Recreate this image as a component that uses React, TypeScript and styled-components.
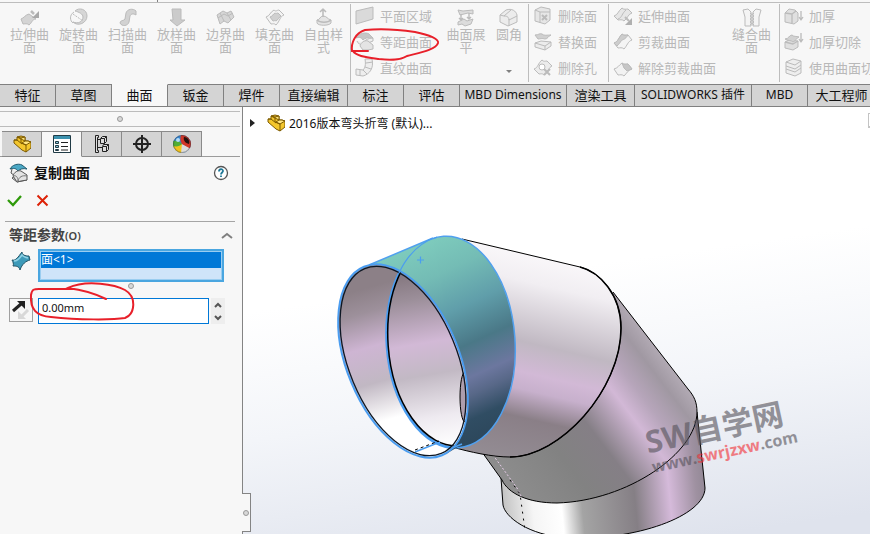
import React from "react";
import styled, { createGlobalStyle, css } from "styled-components";

const GlobalStyle = createGlobalStyle`
  * { box-sizing: border-box; }
  body {
    margin: 0;
    overflow: hidden;
    background: #f7f7f7;
    color: #111;
    font-family: "Noto Sans", "Noto Sans CJK SC", sans-serif;
    font-size: 13px;
  }
  button, input { font: inherit; color: inherit; margin: 0; padding: 0; }
  svg { display: block; flex: none; }
`;

const Page = styled.div`
  position: relative;
  display: flex;
  flex-direction: column;
  min-height: 100vh;
  overflow: hidden;
`;

/* Ribbon */
const TopStrip = styled.div`
  height: 3px;
  border-bottom: 1px solid #bdbdbd;
  &::before {
    content: "";
    display: block;
    width: 157px;
    height: 2px;
    border-right: 1px solid #808080;
  }
`;

const Ribbon = styled.div`
  display: flex;
  height: 81px;
  padding-top: 1px;
`;

const RibbonGroup = styled.div<{ $width: number }>`
  display: flex;
  flex: none;
  width: ${(p) => p.$width}px;
  height: 78px;
  border-right: 1px solid #bdbdbd;
`;

const BigButton = styled.button<{ $width?: number }>`
  display: flex;
  flex: none;
  flex-direction: column;
  align-items: center;
  width: ${(p) => p.$width ?? 49}px;
  padding-top: 4px;
  border: 0;
  background: none;
  color: #b8b8b8;
  line-height: 13px;
  text-align: center;
`;

const BigLabel = styled.span`
  width: 40px;
  word-break: break-all;
`;

const DropArrow = styled.span`
  margin-top: 29px;
  border: 3px solid transparent;
  border-top-color: #808080;
  border-bottom: 0;
`;

const SmallColumn = styled.div<{ $width: number }>`
  display: flex;
  flex: none;
  flex-direction: column;
  width: ${(p) => p.$width}px;
  padding-left: 4px;
`;

const SmallButton = styled.button`
  display: flex;
  align-items: center;
  gap: 5px;
  height: 26px;
  padding-bottom: 2px;
  border: 0;
  background: none;
  color: #b8b8b8;
  line-height: 20px;
  white-space: nowrap;
`;

const CommandTabs = styled.nav`
  display: flex;
  height: 23px;
  overflow: hidden;
`;

const CommandTab = styled.button<{ $width: number; $active?: boolean; $latin?: boolean }>`
  flex: none;
  width: ${(p) => p.$width}px;
  padding-bottom: 1px;
  border: 1px solid #808080;
  border-left: 0;
  background: #d4d4d4;
  color: #111;
  font-size: ${(p) => (p.$latin ? 12 : 13)}px;
  line-height: 20px;
  white-space: nowrap;
  ${(p) =>
    p.$active &&
    css`
      border-top-color: #f7f7f7;
      background: #f7f7f7;
    `}
`;

/* Property panel */
const Body = styled.div`
  display: flex;
  flex: 1;
`;

const Panel = styled.aside`
  display: flex;
  flex: none;
  flex-direction: column;
  width: 243px;
  border-right: 1px solid #848484;
  background: #f7f7f7;
`;

const GripBar = styled.div`
  display: flex;
  align-items: center;
  justify-content: center;
  height: 16px;
  margin: 4px 2px 0 0;
  border: solid #bcbcbc;
  border-width: 1px 0;
`;

const Dot = styled.span`
  width: 6px;
  height: 6px;
  border: 1px solid #999;
  border-radius: 50%;
  background: #d8d8d8;
`;

const PanelTabs = styled.div`
  display: flex;
  height: 26px;
  margin: 4px 2px 0 0;
  padding-left: 2px;
  border-bottom: 1px solid #9c9c9c;
`;

const PanelTab = styled.button<{ $active?: boolean }>`
  display: flex;
  align-items: center;
  justify-content: center;
  width: 40px;
  height: 26px;
  border: 1px solid #8a8a8a;
  border-left: 0;
  background: ${(p) => (p.$active ? "#f7f7f7" : "#d4d4d4")};
  ${(p) => p.$active && "border-bottom-color: #f7f7f7;"}
`;

const TitleRow = styled.header`
  display: flex;
  align-items: center;
  gap: 5px;
  height: 32px;
  padding: 0 13px 0 9px;
`;

const Title = styled.h1`
  flex: 1;
  margin: 0;
  font-size: 14px;
  font-weight: 700;
  line-height: 20px;
`;

const IconButton = styled.button`
  display: flex;
  align-items: center;
  justify-content: center;
  border: 0;
  background: none;
`;

const ActionRow = styled.div`
  display: flex;
  gap: 12px;
  height: 32px;
  padding: 3px 7px;
  align-items: flex-start;
`;

const Section = styled.section`
  margin: 0 7px 0 5px;
  border-top: 1px solid #a5a5a5;
`;

const SectionHead = styled.div`
  display: flex;
  align-items: center;
  height: 27px;
  padding: 0 2px 0 4px;
`;

const SectionTitle = styled.h2`
  flex: 1;
  margin: 0;
  color: #444;
  font-size: 14px;
  font-weight: 600;
  line-height: 20px;
`;

const Mnemonic = styled.span`
  font-size: 11px;
`;

const FieldRow = styled.div`
  display: flex;
  gap: 5px;
  padding-left: 4px;
`;

const FieldIcon = styled.div`
  display: flex;
  justify-content: center;
  width: 24px;
  padding-top: 2px;
`;

const SelectionList = styled.div`
  flex: 1;
  height: 33px;
  margin-right: 11px;
  padding: 1px;
  border: 2px solid #4aa6e0;
  outline: 1px solid #9acdf0;
  outline-offset: -3px;
  background: #cfe4f9;
`;

const SelectionItem = styled.div`
  height: 16px;
  background: #0078d7;
  color: #fff;
  font-size: 12px;
  line-height: 15px;
`;

const GripRow = styled.div`
  display: flex;
  justify-content: center;
  align-items: center;
  height: 8px;
  padding-left: 22px;
`;

const ReverseButton = styled(IconButton)`
  width: 24px;
  height: 24px;
  margin-top: 8px;
  border: 1px solid #a0a0a0;
`;

const DistanceInput = styled.input`
  flex: 1;
  min-width: 0;
  height: 26px;
  margin-top: 8px;
  padding: 0 3px 7px;
  border: 1px solid #0078d7;
  border-radius: 0;
  background: #fff;
  font-size: 11px;
`;

const Spinner = styled.div`
  display: flex;
  flex-direction: column;
  width: 14px;
  height: 26px;
  margin: 8px 10px 0 -3px;
  background: #eee;
`;

const SpinButton = styled(IconButton)`
  flex: 1;
`;

/* Graphics area */
const Viewport = styled.main`
  position: relative;
  flex: 1;
  min-width: 0;
  background: linear-gradient(172deg, #fff 0%, #fff 40%, #f3f5f9 65%, #dfe3ed 96%);
`;

const Scene = styled.svg`
  position: absolute;
  inset: 0;
  width: 100%;
  height: 100%;
`;

const TreeRow = styled.div`
  position: relative;
  display: flex;
  align-items: center;
  height: 20px;
  margin-top: 6px;
  padding-left: 6px;
  font-size: 12px;
`;

const TreeToggle = styled(IconButton)`
  width: 6px;
  margin-right: 12px;
`;

const TreeName = styled.span`
  margin-left: 4px;
`;

const Handle = styled.button`
  position: absolute;
  bottom: 2px;
  left: -1px;
  display: flex;
  align-items: center;
  justify-content: center;
  width: 9px;
  height: 39px;
  padding: 0;
  border: 1px solid #848484;
  border-left: 0;
  background: #f7f7f7;
`;

const EdgeButton = styled.span`
  position: absolute;
  top: 6px;
  right: 0;
  width: 2px;
  height: 15px;
  border: 1px solid #c4c4c4;
  border-width: 1px 0 2px 1px;
`;

const Markup = styled.svg`
  position: absolute;
  top: 0;
  left: 0;
  pointer-events: none;
`;

/* Muted ribbon icons */
const iconPaths: Record<string, React.ReactNode> = {
  extrude: (
    <>
      <path d="M1 11c3-1 4-4 8-5l7 5c-4 0-4 4-7 6-2-2-4-1-6-1z" fill="#d4d4d4" />
      <path d="M11 3l3 3" strokeWidth="2.500" />
      <path d="M19 10h-7l7-7z" fill="#a8a8a8" stroke="none" />
    </>
  ),
  revolve: (
    <>
      <path d="M6 3c4-4 12-2 12 5s-9 11-14 6c5 2 10 0 10-5 0-3-4-5-8-6z" fill="#d6d6d6" />
      <path d="M5 4C0 7 1 13 4 15" />
      <path d="M4 6l10 7" strokeDasharray="2 1" />
    </>
  ),
  sweep: (
    <path d="M2 15c0-3 4-2 5-4l1-6c1-4 7-5 10-2v4c-3-2-5-1-6 1l-1 6c-1 4-7 5-9 1z" fill="#d2d2d2" />
  ),
  loft: <path d="M5 1h9v11h4l-8 6-7-6h3z" fill="#cbcbcb" />,
  boundary: (
    <>
      <path d="M1 7l6-4 4 2 4-2 3 6-6 6-4-2-4 3z" fill="#d6d6d6" />
      <path d="M4 5l4 8M11 5l4 7M2 10l6-4 4 2 5-3" />
    </>
  ),
  fill: (
    <>
      <path d="M1 9c4-1 4-5 8-7 2 2 3 0 5 0l5 5c-4 1-4 6-8 10-2-2-3-1-5-1z" fill="#f4f4f4" />
      <path d="M5 9c3-1 3-3 5-4 1 1 2 0 3 0l3 3c-2 1-3 4-5 5-1-1-2 0-3 0z" fill="#d0d0d0" />
    </>
  ),
  freeform: (
    <>
      <path d="M3 12v3c1 3 12 3 14 0v-3c-4-1-4-4-8-4-3 0-3 4-6 4z" fill="#e4e4e4" />
      <path d="M3 12c3 3 11 3 14 0M9 9V1m-3 3l3-3 3 3" strokeWidth="1.5" />
    </>
  ),
  planar: <path d="M1 5l17-4v12L1 18z" fill="#dadada" />,
  offset: (
    <>
      <path d="M2 9c1 3 3 3 5 4 1-4 6-7 11-7v3l-5 2" fill="#eee" />
      <path d="M1 6C4 1 11 0 14 2l4 4c-5-1-8 0-10 2C6 5 4 5 1 6z" fill="#c6c6c6" />
      <path d="M5 14c1-4 5-6 8-5l5 4v4l-5 1-5 0z" fill="#e4e4e4" />
    </>
  ),
  ruled: (
    <>
      <path d="M1 11l7 1c2-2 3-5 2-11h7c2 9-2 15-9 17l-7-1z" fill="#eee" />
      <path d="M5 12v6m3-6l4 4m-2-7l6 2m-5-6l7-1" />
    </>
  ),
  flatten: (
    <>
      <path d="M2 2l5 1 10-1v4l-5-1-8 2zM2 14l6-3 3 2 6-2-2 5-6 2-3-2-4 1z" fill="#dcdcdc" />
      <path d="M5 6v6m-2-2l2 2 2-2m6-5v6m-2-2l2 2 2-2" strokeWidth="1.4" />
    </>
  ),
  fillet: (
    <>
      <path d="M1 7l6-5c6-2 10 1 11 5v7l-9 4-8-4z" fill="#ececec" />
      <path d="M1 7l4 1c4 0 5 2 5 4l8-4M10 11v7M5 8l7-6" />
    </>
  ),
  deleteFace: (
    <>
      <path d="M2 4l6-3 9 2v11l-5 4-10-3z" fill="#e6e6e6" />
      <path d="M2 4l5 2h10M7 6v11" />
      <path d="M9 9l5 5m0-5l-5 5" strokeWidth="2" />
    </>
  ),
  replaceFace: (
    <>
      <path d="M2 11l6-2 10 1v4l-6 4-10-3z" fill="#ececec" />
      <path d="M2 11l10 3 6-4M12 14v4" />
      <path d="M2 3c4 0 4-2 7-1 2 2 5 1 9 1-3 1-3 4-6 4-3-1-5 0-7 0z" fill="#d0d0d0" />
    </>
  ),
  deleteHole: (
    <>
      <path d="M1 11c4-1 4-6 8-9 2 2 3 1 5 1l5 5c-3 1-4 6-8 9-2-2-3-1-5-1z" fill="#ececec" />
      <circle cx="9" cy="9" r="3" fill="#fff" />
      <path d="M11 11l6 6m0-6l-6 6" strokeWidth="2" />
    </>
  ),
  extend: (
    <>
      <path d="M1 10c4-1 4-5 8-8 2 2 4 1 6 1l4 4c-4 1-4 5-8 8-2-2-4-1-6-1z" fill="#e6e6e6" />
      <path d="M5 13c4-1 4-6 8-9" />
      <path d="M12 11l4 4" strokeWidth="2" />
      <path d="M19 12v7h-7z" fill="#b0b0b0" stroke="none" />
    </>
  ),
  trim: (
    <>
      <path d="M1 11c4-1 5-6 8-9 2 2 4 1 6 1l4 5c-4 1-5 6-8 9-2-2-4-1-6-1z" fill="#f4f4f4" />
      <path d="M1 11c4-1 5-6 8-9 2 2 4 1 6 1-3 5-5 4-7 6-1 2-2 3-4 5z" fill="#cdcdcd" />
    </>
  ),
  untrim: (
    <>
      <path d="M1 11c4-1 5-4 8-6 2 2 4 1 6 1l4 5c-4 1-5 4-8 7-2-2-4-1-6-1z" fill="#f2f2f2" />
      <path d="M9 5c2 2 4 1 6 1l4 5-5 2-3-3z" fill="#c6c6c6" />
    </>
  ),
  knit: (
    <>
      <path d="M1 2l5-1 3 3v14H3V9zm18 0l-5-1-3 3v14h6V9z" fill="#f4f4f4" />
      <path d="M8 5l4 3-4 3 4 3-4 3m4-12L8 8l4 3-4 3 4 3" />
    </>
  ),
  thicken: (
    <>
      <path d="M1 7l4-4 6 1 3 3v8l-4 3-9-2z" fill="#e0e0e0" />
      <path d="M1 7l7 1 4-3M8 8v9M17 5v9m-2-3l2 3 2-3" strokeWidth="1.3" />
    </>
  ),
  thickenCut: (
    <>
      <path d="M1 10l4-2 9 1v6l-5 3-8-2z" fill="#e0e0e0" />
      <path d="M1 7c4 0 4-4 7-4 2 2 4 1 7 2-3 1-3 4-6 5-2-2-5-1-8-3z" fill="#d2d2d2" />
      <path d="M1 10l8 2 5-3M17 1v9m-2-3l2 3 2-3" strokeWidth="1.3" />
    </>
  ),
  cutWith: (
    <>
      <path d="M2 4l7-3 8 2v12l-6 3-9-3z" fill="#eee" />
      <path d="M2 4l9 3 6-4M2 8l9 3 6-4M2 11l9 3 6-4" />
    </>
  ),
};

const ToolIcon = ({ name }: { name: string }) => (
  <svg width="20" height="20" viewBox="0 0 20 20" fill="none" stroke="#bbb" strokeLinejoin="round" aria-hidden="true">
    {iconPaths[name]}
  </svg>
);

const BigTool = ({ icon, label, width, drop }: { icon: string; label: string; width?: number; drop?: boolean }) => (
  <BigButton $width={width}>
    <ToolIcon name={icon} />
    <BigLabel>{label}</BigLabel>
    {drop && <DropArrow />}
  </BigButton>
);

const SmallTools = ({ items, width }: { items: [string, string][]; width: number }) => (
  <SmallColumn $width={width}>
    {items.map(([icon, label]) => (
      <SmallButton key={label}>
        <ToolIcon name={icon} />
        {label}
      </SmallButton>
    ))}
  </SmallColumn>
);

const surfaceTools: [string, string][] = [
  ["extrude", "拉伸曲面"],
  ["revolve", "旋转曲面"],
  ["sweep", "扫描曲面"],
  ["loft", "放样曲面"],
  ["boundary", "边界曲面"],
  ["fill", "填充曲面"],
  ["freeform", "自由样式"],
];

const commandTabs: { label: string; width: number; latin?: boolean }[] = [
  { label: "特征", width: 56 },
  { label: "草图", width: 56 },
  { label: "曲面", width: 56 },
  { label: "钣金", width: 56 },
  { label: "焊件", width: 56 },
  { label: "直接编辑", width: 68 },
  { label: "标注", width: 56 },
  { label: "评估", width: 56 },
  { label: "MBD Dimensions", width: 107, latin: true },
  { label: "渲染工具", width: 68 },
  { label: "SOLIDWORKS 插件", width: 117, latin: true },
  { label: "MBD", width: 56, latin: true },
  { label: "大工程师", width: 68 },
];

const PartIcon = () => (
  <svg width="18" height="18" viewBox="0 0 18 18" stroke="#7d5a00" strokeLinejoin="round" aria-hidden="true">
    <path d="M1 5l3 0V2l4-1 4 1v4l3 0 3 1v6l-5 4-4-2-8-7z" fill="#f3c62d" />
    <path d="M4 2l4 1 4-1v4l-3 2 4 2 5-3-3-1h-3z" fill="#ffe680" />
    <path d="M8 3v5l5 2v7M1 5l3 0 5 4" fill="none" />
  </svg>
);

const PropertyIcon = () => (
  <svg width="18" height="18" viewBox="0 0 18 18" aria-hidden="true">
    <path d="M.5.5h17v17H.5z" fill="#fff" stroke="#203b46" />
    <path d="M1 1h16v3H1z" fill="#3b91ae" />
    <path d="M2.500 6.500h3v2h-3zm0 4h3v2h-3zm0 4h3v1h-3z" fill="#8cc7da" stroke="#203b46" />
    <path d="M8 7.500h7M8 11.500h7M8 15h7" stroke="#222" />
  </svg>
);

const ConfigIcon = () => (
  <svg width="16" height="18" viewBox="0 0 16 18" fill="#ddd" stroke="#222" aria-hidden="true">
    <path d="M1.500.5h3v2h-1v13h1v2h-3zM4 4.500h4M4 12.500h5" />
    <path d="M6.500 3.500l2-2h4v5l-2 2h-4zM8.500 11.500l1-2h5v5l-2 2h-4z" />
    <path d="M7 3.500h3.500v5m0-5l2-2M9 11.500h3.500v5m0-5l2-2" fill="none" />
  </svg>
);

const TargetIcon = () => (
  <svg width="18" height="18" viewBox="0 0 18 18" fill="none" stroke="#222" strokeWidth="2" aria-hidden="true">
    <circle cx="9" cy="9" r="6" />
    <path d="M9 0v18M0 9h18" />
  </svg>
);

const BallIcon = () => (
  <svg width="18" height="18" viewBox="0 0 18 18" aria-hidden="true">
    <defs>
      <clipPath id="ball">
        <circle cx="9" cy="9" r="9" />
      </clipPath>
    </defs>
    <g clipPath="url(#ball)">
      <path d="M0 0h18v18H0z" fill="#3685d2" />
      <path d="M0 6c3-1 7 0 9 3v3H0z" fill="#52ae35" />
      <path d="M0 11c4 1 7 0 9-2v9H0z" fill="#f2c21c" />
      <path d="M9 9l9 4v5H8z" fill="#dcdcdc" />
      <path d="M8 0h10v14L9 9C7 6 7 3 8 0z" fill="#d23627" />
      <path d="M11 2c4 0 6 4 5 7-4-1-6-4-5-7z" fill="#26120f" />
      <circle cx="5" cy="5" r="2" fill="#b6dcf5" />
    </g>
    <circle cx="9" cy="9" r="8.500" fill="none" stroke="#333" strokeOpacity=".4" />
  </svg>
);

const CopySurfaceIcon = () => (
  <svg width="20" height="20" viewBox="0 0 20 20" strokeLinejoin="round" aria-hidden="true">
    <path d="M3 6l-1 4 4 3-3 2 5 4 10-2" fill="#eee" stroke="#555" />
    <path d="M1 6C3 2 9 0 13 2l5 4c-4-1-7 0-9 2C7 5 4 5 1 6z" fill="#4ba8c5" stroke="#1f5b70" />
    <path d="M4 13c1-4 5-6 8-5l6 4v5l-6 1-4 1z" fill="#e3e3e3" stroke="#555" />
    <path d="M4 13c3-1 5 1 5 5 1-4 4-6 9-5" fill="none" stroke="#777" />
  </svg>
);

const FaceIcon = () => (
  <svg width="20" height="20" viewBox="0 0 20 20" aria-hidden="true">
    <path d="M1 9c4 1 6-3 10-8 0 3 3 4 7 4l1 4c-4 1-8 4-10 10-1-4-4-4-7-4 1-2 0-4-1-6z" fill="#3d9ab9" stroke="#235467" strokeLinejoin="round" />
    <path d="M3 10c4 0 6-3 8-6 1 2 3 2 6 3" fill="none" stroke="#91d2e5" strokeWidth="1.500" />
  </svg>
);

const PipeScene = () => (
  <Scene viewBox="243 107 627 427" preserveAspectRatio="xMinYMin slice" role="img" aria-label="弯头模型">
    <defs>
      <linearGradient id="upper" gradientUnits="userSpaceOnUse" x1="540" y1="250" x2="492" y2="456">
        <stop offset="0" stopColor="#fbf9fb" />
        <stop offset=".16" stopColor="#f1eef2" />
        <stop offset=".44" stopColor="#c0b8c2" />
        <stop offset=".58" stopColor="#d2b9d6" />
        <stop offset=".66" stopColor="#c7b0cc" />
        <stop offset=".79" stopColor="#8a7f87" />
        <stop offset="1" stopColor="#938c93" />
      </linearGradient>
      <linearGradient id="middle" gradientUnits="userSpaceOnUse" x1="482" y1="452" x2="642" y2="330">
        <stop offset="0" stopColor="#8d8d8d" />
        <stop offset=".3" stopColor="#828282" />
        <stop offset=".5" stopColor="#857f86" />
        <stop offset=".7" stopColor="#d2b8d6" />
        <stop offset=".8" stopColor="#b6a5ba" />
        <stop offset=".92" stopColor="#a098a2" />
        <stop offset="1" stopColor="#b1a9b3" />
      </linearGradient>
      <linearGradient id="lower" gradientUnits="userSpaceOnUse" x1="501" y1="520" x2="705" y2="500">
        <stop offset="0" stopColor="#bdbdbd" />
        <stop offset=".16" stopColor="#f5f5f5" />
        <stop offset=".3" stopColor="#fff" />
        <stop offset=".4" stopColor="#a4a4a4" />
        <stop offset=".66" stopColor="#857f85" />
        <stop offset=".83" stopColor="#d5bada" />
        <stop offset=".96" stopColor="#9f91a1" />
        <stop offset="1" stopColor="#958a98" />
      </linearGradient>
      <linearGradient id="selected" gradientUnits="userSpaceOnUse" x1="430" y1="243" x2="502" y2="436">
        <stop offset="0" stopColor="#7dcabc" />
        <stop offset=".16" stopColor="#74bcb5" />
        <stop offset=".35" stopColor="#609eaa" />
        <stop offset=".53" stopColor="#4a7887" />
        <stop offset=".68" stopColor="#6c779f" />
        <stop offset=".76" stopColor="#586888" />
        <stop offset=".87" stopColor="#304d63" />
        <stop offset="1" stopColor="#2c465a" />
      </linearGradient>
      <linearGradient id="boreFront" gradientUnits="userSpaceOnUse" x1="383" y1="270" x2="365" y2="425">
        <stop offset=".05" stopColor="#8c8087" />
        <stop offset=".2" stopColor="#9d909b" />
        <stop offset=".42" stopColor="#ceb5d3" />
        <stop offset=".65" stopColor="#c1b8c3" />
        <stop offset=".9" stopColor="#fff" />
      </linearGradient>
      <linearGradient id="boreBack" gradientUnits="userSpaceOnUse" x1="420" y1="270" x2="438" y2="447">
        <stop offset="0" stopColor="#84777f" />
        <stop offset=".15" stopColor="#9c8f9a" />
        <stop offset=".4" stopColor="#d2b9d6" />
        <stop offset=".58" stopColor="#c2b9c4" />
        <stop offset=".82" stopColor="#eeeaf0" />
        <stop offset="1" stopColor="#fff" />
      </linearGradient>
      <clipPath id="opening">
        <ellipse cx="403" cy="361" rx="55" ry="101" transform="rotate(-22.5 403 361)" />
      </clipPath>
    </defs>

    <path d="M501 478l2 27c2 12 25 30 64 33 68 3 138-22 138-50l-8-76z" fill="url(#lower)" stroke="#000" />
    <path d="M482 452l20 28c6 13 25 23 55 23 70-2 140-50 140-91 0-10-3-16-9-23l-75-97-80 60z" fill="url(#middle)" />
    <path d="M482 452l20 28c6 13 25 23 55 23 70-2 140-50 140-91 0-10-3-16-9-23l-75-97" fill="none" stroke="#000" />
    <path d="M493 455l24 33 5 10" fill="none" stroke="#e7cce9" strokeDasharray="2 2" />
    <path d="M510 480l10 14 5 36" fill="none" stroke="#000" strokeDasharray="2 5" />
    <path d="M462 239l118 28c20 5 41 28 41 61 0 62-61 129-111 129-18 0-40-5-58-10z" fill="url(#upper)" stroke="#000" />
    <path d="M580 267c20 5 41 28 41 61 0 62-61 129-111 129" fill="none" stroke="#000" strokeWidth="1.5" />

    <ellipse cx="451" cy="342" rx="64" ry="106" transform="rotate(-4 451 342)" fill="url(#selected)" stroke="#50a0ef" strokeWidth="1.5" />
    <path d="M369 265l64-27 20 110 13 94-20 12z" fill="url(#selected)" />
    <path d="M369 265l64-27M430 457l32-13" stroke="#50a0ef" strokeWidth="1.5" />
    <ellipse cx="403" cy="361" rx="56" ry="102" transform="rotate(-22.5 403 361)" fill="url(#boreFront)" stroke="#4b9df0" strokeWidth="2" />
    <g clipPath="url(#opening)">
      <ellipse cx="451" cy="342" rx="64" ry="106" transform="rotate(-4 451 342)" fill="url(#boreBack)" stroke="#4b9df0" strokeWidth="3" />
      <ellipse cx="452" cy="341" rx="64" ry="105" transform="rotate(-4 452 341)" fill="none" stroke="#000" strokeWidth="1.5" />
      <ellipse cx="465" cy="397" rx="5" ry="25" fill="#ad9ead" stroke="#000" />
      <path d="M415 452l25-10" stroke="#4b9df0" strokeWidth="1.5" />
      <path d="M415 450l24-9" stroke="#000" strokeDasharray="3 3" />
    </g>
    <ellipse cx="403" cy="361" rx="54" ry="100" transform="rotate(-22.5 403 361)" fill="none" stroke="#0d1724" strokeWidth="1.3" />
    <path d="M399 273c7-15 19-30 38-36M417 260h7m-3.500-3.500v7" fill="none" stroke="#4b9df0" strokeWidth="1.2" />

    <g transform="rotate(-12 650 453)" fontFamily="'Open Sans', 'Noto Sans CJK SC', sans-serif" fontWeight="700" fill="#55525a" opacity=".6">
      <text x="648" y="453" fontSize="31">SW自学网</text>
      <text x="649" y="473" fontSize="16">
        www.<tspan fill="#f22f35">swrjzxw</tspan>.com
      </text>
    </g>
  </Scene>
);

export default function App() {
  return (
    <Page>
      <GlobalStyle />
      <TopStrip />
      <Ribbon>
        <RibbonGroup $width={351}>
          <SmallColumn $width={5} />
          {surfaceTools.map(([icon, label]) => (
            <BigTool key={label} icon={icon} label={label} />
          ))}
        </RibbonGroup>
        <RibbonGroup $width={178}>
          <SmallTools
            width={92}
            items={[
              ["planar", "平面区域"],
              ["offset", "等距曲面"],
              ["ruled", "直纹曲面"],
            ]}
          />
          <BigTool icon="flatten" label="曲面展平" width={46} />
          <BigTool icon="fillet" label="圆角" width={40} drop />
        </RibbonGroup>
        <RibbonGroup $width={80}>
          <SmallTools
            width={79}
            items={[
              ["deleteFace", "删除面"],
              ["replaceFace", "替换面"],
              ["deleteHole", "删除孔"],
            ]}
          />
        </RibbonGroup>
        <RibbonGroup $width={171}>
          <SmallTools
            width={118}
            items={[
              ["extend", "延伸曲面"],
              ["trim", "剪裁曲面"],
              ["untrim", "解除剪裁曲面"],
            ]}
          />
          <BigTool icon="knit" label="缝合曲面" />
        </RibbonGroup>
        <SmallTools
          width={120}
          items={[
            ["thicken", "加厚"],
            ["thickenCut", "加厚切除"],
            ["cutWith", "使用曲面切"],
          ]}
        />
      </Ribbon>
      <CommandTabs>
        {commandTabs.map((tab) => (
          <CommandTab key={tab.label} $width={tab.width} $latin={tab.latin} $active={tab.label === "曲面"}>
            {tab.label}
          </CommandTab>
        ))}
      </CommandTabs>
      <Body>
        <Panel>
          <GripBar>
            <Dot />
          </GripBar>
          <PanelTabs>
            <PanelTab aria-label="设计树"><PartIcon /></PanelTab>
            <PanelTab aria-label="属性" $active><PropertyIcon /></PanelTab>
            <PanelTab aria-label="配置"><ConfigIcon /></PanelTab>
            <PanelTab aria-label="尺寸"><TargetIcon /></PanelTab>
            <PanelTab aria-label="外观"><BallIcon /></PanelTab>
          </PanelTabs>
          <TitleRow>
            <CopySurfaceIcon />
            <Title>复制曲面</Title>
            <IconButton aria-label="帮助">
              <svg width="16" height="16" viewBox="0 0 16 16" fill="none">
                <circle cx="8" cy="8" r="6.500" fill="#fff" stroke="#555" strokeWidth="1.300" />
                <path d="M6 6.500c0-3 4-3 4-.5 0 1.500-2 1.500-2 3.500m0 1v1.500" stroke="#1f7897" strokeWidth="1.800" />
              </svg>
            </IconButton>
          </TitleRow>
          <ActionRow>
            <IconButton aria-label="确定">
              <svg width="16" height="16" viewBox="0 0 16 16" fill="none" stroke="#2f9a0b" strokeWidth="2.300">
                <path d="M1 8l5 5 8-9" />
              </svg>
            </IconButton>
            <IconButton aria-label="取消">
              <svg width="16" height="16" viewBox="0 0 16 16" fill="none" stroke="#dd2208" strokeWidth="2">
                <path d="M2.500 3.500l10 10M12.500 3.500l-10 10" />
              </svg>
            </IconButton>
          </ActionRow>
          <Section>
            <SectionHead>
              <SectionTitle>
                等距参数<Mnemonic>(O)</Mnemonic>
              </SectionTitle>
              <IconButton aria-label="折叠">
                <svg width="12" height="10" viewBox="0 0 12 10" fill="none" stroke="#808080" strokeWidth="2">
                  <path d="M1 7l5-4 5 4" />
                </svg>
              </IconButton>
            </SectionHead>
            <FieldRow>
              <FieldIcon><FaceIcon /></FieldIcon>
              <SelectionList>
                <SelectionItem>面&lt;1&gt;</SelectionItem>
              </SelectionList>
            </FieldRow>
            <GripRow>
              <Dot />
            </GripRow>
            <FieldRow>
              <ReverseButton aria-label="反转等距方向">
                <svg width="20" height="20" viewBox="0 0 20 20">
                  <path d="M2 11l8-7" stroke="#222" strokeWidth="3" />
                  <path d="M6 1h8v8z" fill="#222" />
                  <path d="M17 10l-6 6" stroke="#d8d8d8" strokeWidth="3" />
                  <path d="M7 11v8h8z" fill="#d8d8d8" />
                </svg>
              </ReverseButton>
              <DistanceInput aria-label="等距距离" defaultValue="0.00mm" />
              <Spinner>
                <SpinButton aria-label="增加">
                  <svg width="10" height="8" viewBox="0 0 10 8" fill="none" stroke="#555" strokeWidth="2"><path d="M2 6l3-3 3 3" /></svg>
                </SpinButton>
                <SpinButton aria-label="减少">
                  <svg width="10" height="8" viewBox="0 0 10 8" fill="none" stroke="#555" strokeWidth="2"><path d="M2 2l3 3 3-3" /></svg>
                </SpinButton>
              </Spinner>
            </FieldRow>
          </Section>
        </Panel>
        <Viewport>
          <PipeScene />
          <TreeRow>
            <TreeToggle aria-label="展开">
              <svg width="5" height="8" viewBox="0 0 5 8"><path d="M0 0l5 4-5 4z" fill="#222" /></svg>
            </TreeToggle>
            <PartIcon />
            <TreeName>2016版本弯头折弯 (默认)...</TreeName>
          </TreeRow>
          <Handle aria-label="折叠面板"><Dot /></Handle>
          <EdgeButton />
        </Viewport>
      </Body>
      <Markup width="450" height="330" viewBox="0 0 450 330" fill="none" stroke="#e8202a" strokeWidth="2" strokeLinecap="round" aria-hidden="true">
        <path d="M368 51h-16c-1-8 3-18 13-21 18-2 37 0 50 2 15 3 24 7 23 11-2 7-20 10-31 13-8 5-19 4-28 3-14-2-23-3-26-8" />
        <path d="M106 299c-12-6-22-9-38-11 19-9 48-3 57 2 12 7 10 24 0 28-12 2-47 2-74-1-15-1-21-8-20-22 1-6 3-6 8-6h35" />
      </Markup>
    </Page>
  );
}
